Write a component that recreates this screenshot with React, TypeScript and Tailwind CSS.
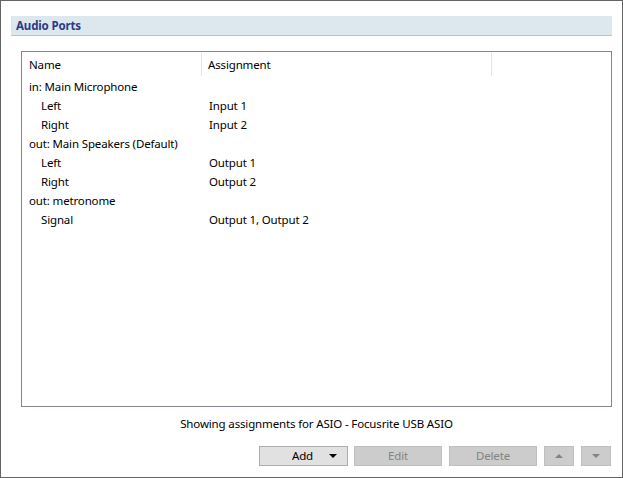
const ROWS = [
  { name: 'in: Main Microphone', assign: '', child: false },
  { name: 'Left', assign: 'Input 1', child: true },
  { name: 'Right', assign: 'Input 2', child: true },
  { name: 'out: Main Speakers (Default)', assign: '', child: false },
  { name: 'Left', assign: 'Output 1', child: true },
  { name: 'Right', assign: 'Output 2', child: true },
  { name: 'out: metronome', assign: '', child: false },
  { name: 'Signal', assign: 'Output 1, Output 2', child: true },
];

function Triangle({ up, color }: { up?: boolean; color: string }) {
  return (
    <svg width="8" height="4" viewBox="0 0 8 4">
      <polygon points={up ? '0,4 8,4 4,0' : '0,0 8,0 4,4'} fill={color} />
    </svg>
  );
}

export default function App() {
  return (
    <div
      className="w-[623px] h-[478px] border border-[#646464] bg-white flex flex-col px-[10px] text-[11.5px] tracking-[-0.15px] text-black"
      style={{ fontFamily: '"Noto Sans", "Open Sans", sans-serif' }}
    >
      {/* Section header */}
      <div className="mt-[15px] h-[20px] bg-[#dde7ee] border-b border-[#b9c1c9] flex items-center pl-[5px]">
        <span className="font-bold text-[#2b3a86] leading-none">Audio Ports</span>
      </div>

      {/* Port table */}
      <div className="mt-[15px] ml-[10px] h-[356px] border border-[#828790] flex flex-col">
        <div className="h-[25px] flex items-stretch">
          <div className="w-[180px] flex items-center pl-[7px] border-r border-[#e5e5e5] my-[1px]">Name</div>
          <div className="w-[290px] flex items-center pl-[6px] border-r border-[#e5e5e5] my-[1px]">Assignment</div>
          <div className="flex-1" />
        </div>
        {ROWS.map((r, i) => (
          <div key={i} className="h-[19px] flex items-center">
            <div className={`w-[180px] ${r.child ? 'pl-[19px]' : 'pl-[7px]'}`}>{r.name}</div>
            <div className="pl-[7px]">{r.assign}</div>
          </div>
        ))}
      </div>

      {/* Status */}
      <div className="h-[34px] flex items-center justify-center pl-[10px]">
        Showing assignments for ASIO - Focusrite USB ASIO
      </div>

      {/* Buttons */}
      <div className="mt-[5px] mr-[1px] flex justify-end gap-[7px]">
        <button className="w-[89px] h-[20px] bg-[#e1e1e1] border border-[#adadad] flex items-center justify-between pl-[32px] pr-[10px] -mr-[1px]">
          <span>Add</span>
          <Triangle color="#000" />
        </button>
        <button className="w-[88px] h-[20px] bg-[#cccccc] border border-[#bfbfbf] text-[#838383]">Edit</button>
        <button className="w-[88px] h-[20px] bg-[#cccccc] border border-[#bfbfbf] text-[#838383]">Delete</button>
        <button className="w-[30px] h-[20px] bg-[#cccccc] border border-[#bfbfbf] flex items-center justify-center">
          <Triangle up color="#838383" />
        </button>
        <button className="w-[30px] h-[20px] bg-[#cccccc] border border-[#bfbfbf] flex items-center justify-center">
          <Triangle color="#838383" />
        </button>
      </div>
    </div>
  );
}
